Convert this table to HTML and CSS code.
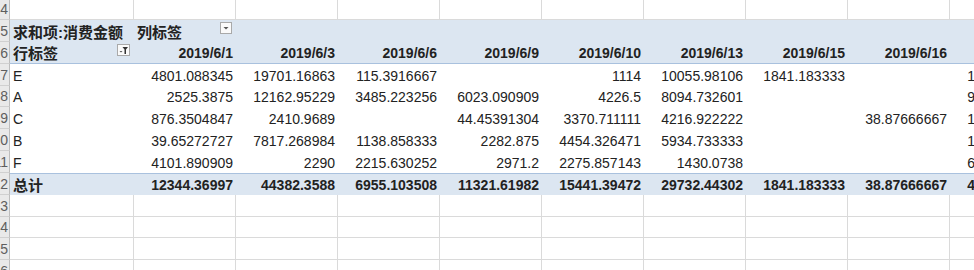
FILE: index.html
```html
<!DOCTYPE html>
<html lang="zh-CN">
<head>
<meta charset="utf-8">
<title>数据透视表</title>
<link rel="stylesheet" href="styles.css">
</head>
<body>
<div class="sheet">
  <!-- row 4 -->
  <div class="rh">4</div>
  <div class="c"></div><div class="c"></div><div class="c"></div><div class="c"></div><div class="c"></div>
  <div class="c"></div><div class="c"></div><div class="c"></div><div class="c"></div><div class="c"></div>

  <!-- row 5 -->
  <div class="rh">5</div>
  <div class="p hb lab"><span class="cjk">求和项:消费金额</span></div>
  <div class="p hb lab split"><span class="cjk">列标签</span>
    <span class="btn"><svg width="12" height="12" viewBox="0 0 12 12"><rect x="0.5" y="0.5" width="11" height="11" fill="#fafafa" stroke="#a9a9a9"/><path d="M3.5 5h5l-2.5 2.5z" fill="#555"/></svg></span>
  </div>
  <div class="p hb"></div><div class="p hb"></div><div class="p hb"></div><div class="p hb"></div>
  <div class="p hb"></div><div class="p hb"></div><div class="p hb"></div><div class="p hb"></div>

  <!-- row 6 -->
  <div class="rh">6</div>
  <div class="p hb hr lab split"><span class="cjk">行标签</span>
    <span class="btn"><svg width="13" height="12" viewBox="0 0 13 12"><rect x="0.5" y="0.5" width="12" height="11" fill="#fafafa" stroke="#a9a9a9"/><path d="M2.5 7h3l-1.5 1.6z" fill="#555"/><path d="M5.5 3h5.5l-2 2.6v4.4h-1.5v-4.4z" fill="#333"/></svg></span>
  </div>
  <div class="p hb hr n b">2019/6/1</div>
  <div class="p hb hr n b">2019/6/3</div>
  <div class="p hb hr n b">2019/6/6</div>
  <div class="p hb hr n b">2019/6/9</div>
  <div class="p hb hr n b">2019/6/10</div>
  <div class="p hb hr n b">2019/6/13</div>
  <div class="p hb hr n b">2019/6/15</div>
  <div class="p hb hr n b">2019/6/16</div>
  <div class="p hb hr n b">2019/6/18</div>

  <!-- row 7 -->
  <div class="rh">7</div>
  <div class="p lab">E</div>
  <div class="p n">4801.088345</div><div class="p n">19701.16863</div><div class="p n">115.3916667</div><div class="p n"></div>
  <div class="p n">1114</div><div class="p n">10055.98106</div><div class="p n">1841.183333</div><div class="p n"></div><div class="p n">12580.27273</div>

  <!-- row 8 -->
  <div class="rh">8</div>
  <div class="p lab">A</div>
  <div class="p n">2525.3875</div><div class="p n">12162.95229</div><div class="p n">3485.223256</div><div class="p n">6023.090909</div>
  <div class="p n">4226.5</div><div class="p n">8094.732601</div><div class="p n"></div><div class="p n"></div><div class="p n">9350.466667</div>

  <!-- row 9 -->
  <div class="rh">9</div>
  <div class="p lab">C</div>
  <div class="p n">876.3504847</div><div class="p n">2410.9689</div><div class="p n"></div><div class="p n">44.45391304</div>
  <div class="p n">3370.711111</div><div class="p n">4216.922222</div><div class="p n"></div><div class="p n">38.87666667</div><div class="p n">1203.833333</div>

  <!-- row 10 -->
  <div class="rh">10</div>
  <div class="p lab">B</div>
  <div class="p n">39.65272727</div><div class="p n">7817.268984</div><div class="p n">1138.858333</div><div class="p n">2282.875</div>
  <div class="p n">4454.326471</div><div class="p n">5934.733333</div><div class="p n"></div><div class="p n"></div><div class="p n">1526.714286</div>

  <!-- row 11 -->
  <div class="rh">11</div>
  <div class="p lab">F</div>
  <div class="p n">4101.890909</div><div class="p n">2290</div><div class="p n">2215.630252</div><div class="p n">2971.2</div>
  <div class="p n">2275.857143</div><div class="p n">1430.0738</div><div class="p n"></div><div class="p n"></div><div class="p n">6012.358974</div>

  <!-- row 12 total -->
  <div class="rh">12</div>
  <div class="p tot lab b"><span class="cjk">总计</span></div>
  <div class="p tot n b">12344.36997</div><div class="p tot n b">44382.3588</div><div class="p tot n b">6955.103508</div><div class="p tot n b">11321.61982</div>
  <div class="p tot n b">15441.39472</div><div class="p tot n b">29732.44302</div><div class="p tot n b">1841.183333</div><div class="p tot n b">38.87666667</div><div class="p tot n b">41673.64569</div>

  <!-- rows 13-16 -->
  <div class="rh">13</div>
  <div class="c"></div><div class="c"></div><div class="c"></div><div class="c"></div><div class="c"></div>
  <div class="c"></div><div class="c"></div><div class="c"></div><div class="c"></div><div class="c"></div>
  <div class="rh">14</div>
  <div class="c"></div><div class="c"></div><div class="c"></div><div class="c"></div><div class="c"></div>
  <div class="c"></div><div class="c"></div><div class="c"></div><div class="c"></div><div class="c"></div>
  <div class="rh">15</div>
  <div class="c"></div><div class="c"></div><div class="c"></div><div class="c"></div><div class="c"></div>
  <div class="c"></div><div class="c"></div><div class="c"></div><div class="c"></div><div class="c"></div>
  <div class="rh">16</div>
  <div class="c"></div><div class="c"></div><div class="c"></div><div class="c"></div><div class="c"></div>
  <div class="c"></div><div class="c"></div><div class="c"></div><div class="c"></div><div class="c"></div>
</div>
</body>
</html>
```

FILE: styles.css
```css
html, body {
  margin: 0;
  padding: 0;
  background: #ffffff;
  overflow: hidden;
}

.sheet {
  display: grid;
  grid-template-columns: 10px 124px repeat(9, 102px);
  grid-template-rows: 20px repeat(12, 21.85px);
  width: 1052px;
  font-family: "Liberation Sans", "Noto Sans CJK SC", sans-serif;
  font-size: 14px;
  color: #222222;
}

.sheet > div {
  box-sizing: border-box;
  min-width: 0;
  overflow: hidden;
  white-space: nowrap;
  display: flex;
  align-items: flex-end;
  line-height: 17px;
}

.rh {
  background: #e9e9e9;
  border-right: 1px solid #bdbdbd;
  border-bottom: 1px solid #d0d0d0;
  justify-content: flex-end;
  padding-right: 1px;
  padding-bottom: 1px;
  color: #5e5e5e;
  font-size: 14px;
}

.c {
  border-right: 1px solid #dadada;
  border-bottom: 1px solid #dadada;
}

.p {
  background: #ffffff;
  padding-bottom: 1px;
}

.hb {
  background: #dce6f1;
}

.hr {
  border-bottom: 1px solid #a9c1de;
}

.tot {
  background: #dce6f1;
  border-top: 1px solid #a9c1de;
}

.lab {
  justify-content: flex-start;
  padding-left: 3px;
}

.split {
  justify-content: space-between;
  padding-right: 4px;
}

.n {
  justify-content: flex-end;
  padding-right: 3px;
}

.b {
  font-weight: bold;
}

.cjk {
  font-size: 15px;
  font-weight: bold;
}

.btn {
  align-self: flex-start;
  margin-top: 2px;
  display: flex;
  flex: none;
}

.btn svg {
  display: block;
}
```
